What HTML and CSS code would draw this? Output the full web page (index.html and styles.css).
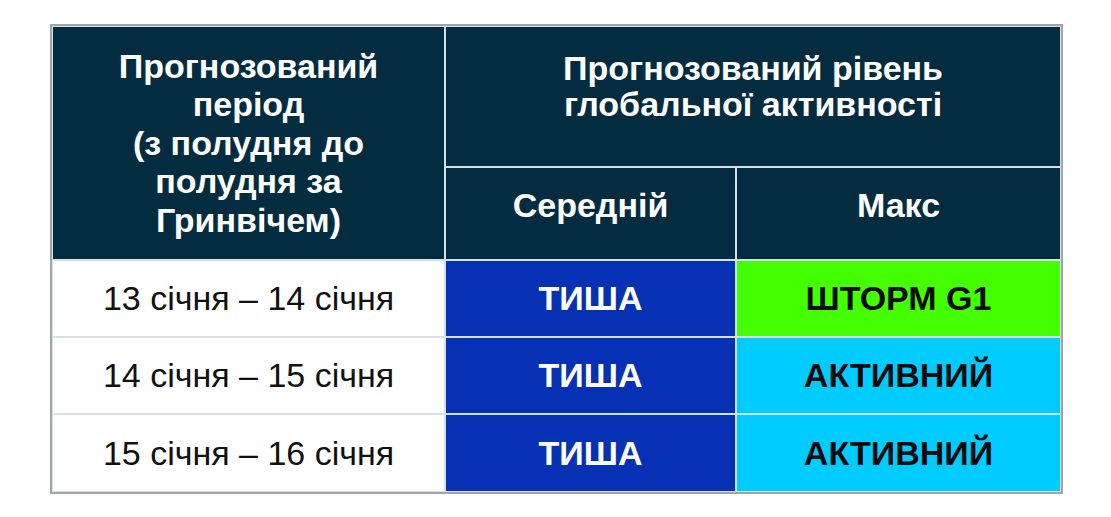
FILE: index.html
```html
<!DOCTYPE html>
<html lang="uk">
<head>
<meta charset="utf-8">
<title>Прогноз</title>
<link rel="stylesheet" href="styles.css">
</head>
<body>
<div class="table">
  <div class="cell head period">Прогнозований<br>період<br>(з полудня до<br>полудня за<br>Гринвічем)</div>
  <div class="cell head level">Прогнозований рівень<br>глобальної активності</div>
  <div class="cell head sub">Середній</div>
  <div class="cell head sub">Макс</div>

  <div class="cell date">13 січня – 14 січня</div>
  <div class="cell quiet">ТИША</div>
  <div class="cell storm">ШТОРМ G1</div>

  <div class="cell date">14 січня – 15 січня</div>
  <div class="cell quiet">ТИША</div>
  <div class="cell active">АКТИВНИЙ</div>

  <div class="cell date">15 січня – 16 січня</div>
  <div class="cell quiet">ТИША</div>
  <div class="cell active">АКТИВНИЙ</div>
</div>
</body>
</html>
```
FILE: styles.css
```css
html, body {
  margin: 0;
  padding: 0;
  background: #ffffff;
}
body {
  padding: 24px 0 0 50px;
  font-family: "Liberation Sans", Arial, sans-serif;
}
.table {
  display: grid;
  grid-template-columns: 391px 289px 323px;
  grid-template-rows: 139px 91px 75px 75px 76px;
  gap: 2px;
  width: max-content;
  padding: 1px;
  border: 2px solid #a4a4a4;
  background: #d3e2e9;
}
.cell {
  display: flex;
  align-items: center;
  justify-content: center;
  text-align: center;
  font-size: 34px;
  line-height: 38.5px;
}
.head {
  background: #032c40;
  color: #ffffff;
  font-weight: bold;
}
.period {
  grid-row: 1 / 3;
}
.level {
  grid-column: 2 / 4;
  line-height: 36px;
  padding-bottom: 22px;
}
.sub {
  padding-bottom: 16px;
}
.date {
  background: #ffffff;
  color: #111111;
}
.quiet {
  background: #0631b4;
  color: #ffffff;
  font-weight: bold;
}
.storm {
  background: #44ff00;
  color: #0b0b0b;
  font-weight: bold;
}
.active {
  background: #00ccff;
  color: #0b0b0b;
  font-weight: bold;
}
```
